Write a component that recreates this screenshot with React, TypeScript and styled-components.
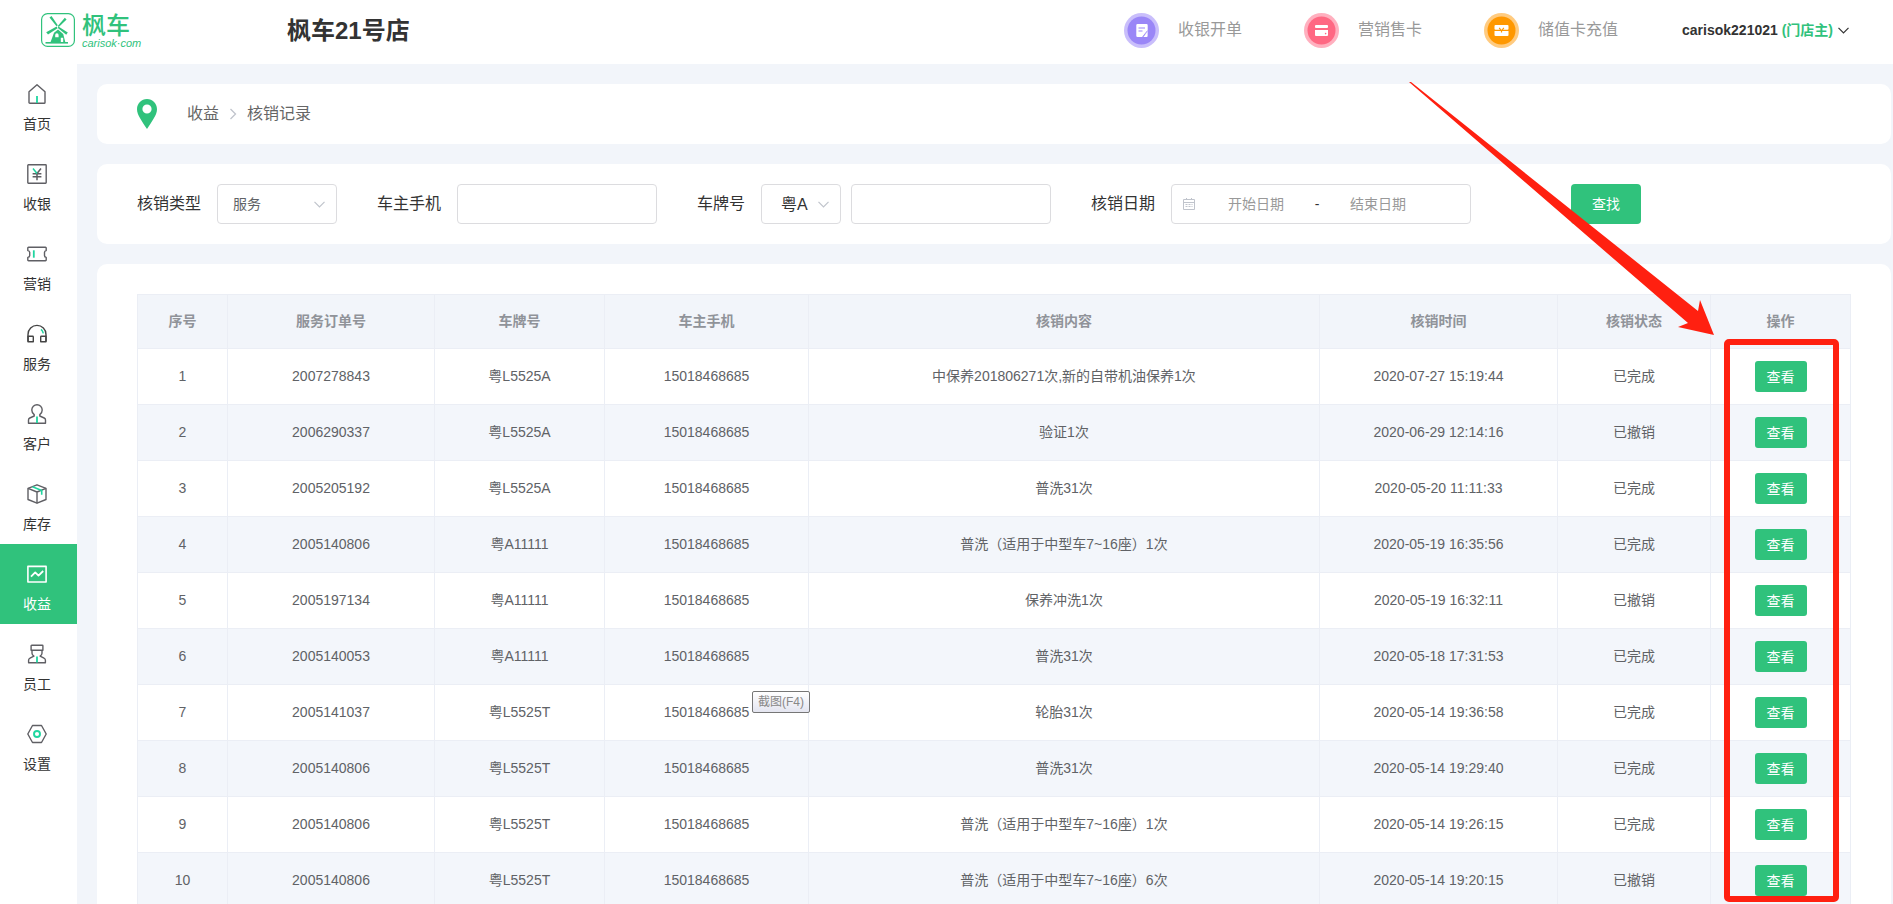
import React from "react";
import styled, { createGlobalStyle, css } from "styled-components";

const GREEN = "#30c27c";
const MINT = "#1fd6a0";
const INK = "#5f5f64";

const GlobalStyle = createGlobalStyle`
  *, *::before, *::after { box-sizing: border-box; }
  body {
    margin: 0;
    background: #f2f5fa;
    color: #333;
    font-family: "Liberation Sans", "Noto Sans CJK SC", sans-serif;
    font-size: 14px;
  }
  button, input, select { font: inherit; margin: 0; }
  a { color: inherit; text-decoration: none; }
`;

/* ---------- shell ---------- */

const Shell = styled.div`
  display: flex;
  flex-direction: column;
  height: 100vh;
`;

const TopBar = styled.header`
  display: flex;
  align-items: center;
  flex: none;
  height: 64px;
  padding: 0 44px 14px 41px;
  background: #fff;
`;

const Body = styled.div`
  display: flex;
  flex: 1;
  min-height: 0;
`;

const Main = styled.main`
  flex: 1;
  min-width: 0;
  overflow: auto;
  scrollbar-width: none;
`;

const Canvas = styled.div`
  position: relative;
  display: flex;
  flex-direction: column;
  gap: 20px;
  padding: 20px 2px 20px 20px;
`;

/* ---------- top bar ---------- */

const Brand = styled.a`
  display: flex;
  align-items: center;
  gap: 7px;
  width: 246px;
  padding-top: 10px;
  color: ${GREEN};
`;

const BrandText = styled.span`
  display: flex;
  flex-direction: column;
  gap: 2px;
`;

const BrandName = styled.span`
  font-family: "Noto Sans CJK SC", sans-serif;
  font-size: 24px;
  line-height: 24px;
  font-weight: 500;
`;

const BrandDomain = styled.span`
  font-family: "Liberation Sans", sans-serif;
  font-style: italic;
  font-size: 11px;
  line-height: 10px;
`;

const StoreName = styled.h1`
  margin: 0;
  padding-top: 12px;
  font-size: 24px;
  line-height: 30px;
  font-weight: 700;
`;

const Shortcuts = styled.nav`
  display: flex;
  gap: 62px;
  margin-left: auto;
  padding-top: 10px;
`;

const Shortcut = styled.a`
  display: flex;
  align-items: center;
  gap: 19px;
  font-size: 16px;
  line-height: 22px;
  color: #999;
`;

const UserMenu = styled.button`
  display: flex;
  align-items: center;
  gap: 5px;
  margin-left: 64px;
  padding: 10px 0 0;
  border: 0;
  background: none;
  color: #333;
  font-size: 14px;
  line-height: 20px;
  font-weight: 700;
`;

const Role = styled.span`
  color: ${GREEN};
`;

/* ---------- side bar ---------- */

const SideBar = styled.nav`
  flex: none;
  width: 77px;
  background: #fff;
`;

const SideItem = styled.a<{ $active?: boolean }>`
  display: flex;
  flex-direction: column;
  align-items: center;
  gap: 10px;
  height: 80px;
  padding: 20px 3px 0 0;
  line-height: 20px;
  color: #333;
  ${(p) =>
    p.$active &&
    css`
      background: ${GREEN};
      color: #fff;
    `}
`;

/* ---------- cards ---------- */

const Card = styled.section`
  background: #fff;
  border-radius: 10px;
`;

const Crumbs = styled(Card)`
  display: flex;
  align-items: center;
  height: 60px;
  padding: 0 40px;
  gap: 30px;
`;

const CrumbTrail = styled.nav`
  display: flex;
  align-items: center;
  gap: 10px;
  font-size: 16px;
  line-height: 24px;
  color: #666;
`;

const FilterBar = styled(Card).attrs({ as: "form" })`
  display: flex;
  align-items: center;
  gap: 40px;
  padding: 20px 40px;
`;

const Field = styled.div`
  display: flex;
  align-items: center;
  gap: 10px;
`;

const FieldLabel = styled.label`
  margin-right: 6px;
  font-size: 16px;
  line-height: 24px;
  white-space: nowrap;
`;

const controlBox = css`
  height: 40px;
  border: 1px solid #dcdcdf;
  border-radius: 4px;
  background: #fff;
  outline: none;
`;

const SelectWrap = styled.span`
  position: relative;
  display: flex;
  align-items: center;
`;

const SelectBox = styled.select<{ $compact?: boolean }>`
  ${controlBox}
  appearance: none;
  width: ${(p) => (p.$compact ? 80 : 120)}px;
  padding: 0 10px 0 ${(p) => (p.$compact ? 19 : 15)}px;
  font-size: ${(p) => (p.$compact ? 16 : 14)}px;
  color: ${(p) => (p.$compact ? "#333" : "#606266")};
`;

const SelectArrow = styled.span`
  position: absolute;
  right: 12px;
  display: flex;
  pointer-events: none;
`;

const TextBox = styled.input`
  ${controlBox}
  width: 200px;
  padding: 0 15px;
`;

const DateRange = styled.div`
  ${controlBox}
  display: flex;
  align-items: center;
  width: 300px;
  padding: 0 10px;
`;

const DateInput = styled.input`
  width: 108px;
  padding: 0;
  border: 0;
  outline: none;
  text-align: center;
  color: #606266;
  &::placeholder {
    color: #999;
    opacity: 1;
  }
`;

const DateIcon = styled.svg`
  flex: none;
  margin-right: 6px;
`;

const Dash = styled.span`
  width: 14px;
  text-align: center;
`;

const ActionButton = styled.button<{ $small?: boolean }>`
  width: ${(p) => (p.$small ? 52 : 70)}px;
  height: ${(p) => (p.$small ? 31 : 40)}px;
  margin-left: ${(p) => (p.$small ? 0 : 60)}px;
  padding: 0;
  border: 0;
  border-radius: ${(p) => (p.$small ? 3 : 4)}px;
  background: ${GREEN};
  color: #fff;
  line-height: 20px;
  vertical-align: middle;
`;

/* ---------- table ---------- */

const TableCard = styled(Card)`
  padding: 30px 40px;
`;

const Table = styled.table`
  width: 100%;
  table-layout: fixed;
  border-collapse: separate;
  border-spacing: 0;
  border: 1px solid #ebeef5;
  border-width: 1px 0 0 1px;
  text-align: center;
  line-height: 23px;
`;

const Col = styled.col<{ $w?: number }>`
  width: ${(p) => (p.$w ? `${p.$w}px` : "auto")};
`;

const HeadCell = styled.th`
  height: 54px;
  padding: 0;
  border: 1px solid #ebeef5;
  border-width: 0 1px 1px 0;
  background: #f2f5fa;
  color: #909399;
  font-weight: 700;
`;

const Row = styled.tr`
  &:nth-child(even) {
    background: #f3f6fb;
  }
`;

const Cell = styled.td`
  height: 56px;
  padding: 0;
  border: 1px solid #ebeef5;
  border-width: 0 1px 1px 0;
  color: #606266;
`;

/* ---------- overlays ---------- */

const Highlight = styled.div`
  position: absolute;
  top: 275px;
  right: 54px;
  width: 115px;
  height: 563px;
  border: 6px solid #ff2010;
  border-radius: 5px;
  pointer-events: none;
`;

const Pointer = styled.svg`
  position: absolute;
  top: 18px;
  right: 179px;
  pointer-events: none;
`;

const Tooltip = styled.div`
  position: absolute;
  top: 627px;
  left: 675px;
  height: 22px;
  padding: 0 5px;
  border: 1px solid #767676;
  border-radius: 2px;
  background: linear-gradient(#fff, #e4e5f0);
  color: #888;
  font-size: 12px;
  line-height: 20px;
`;

/* ---------- drawings ---------- */

const Chevron = ({ color = "#c0c4cc", w = 11 }: { color?: string; w?: number }) => (
  <svg width={w} height="7" viewBox="0 0 11 7" fill="none" stroke={color} strokeWidth="1.2">
    <path d="M0.5 0.8 5.5 6 10.5 0.8" />
  </svg>
);

const Windmill = () => (
  <svg width="34" height="34" viewBox="0 0 34 34" fill="none" stroke={GREEN}>
    <rect x="0.6" y="0.6" width="32.8" height="32.8" rx="6" strokeWidth="1.2" />
    <path d="M8.500 4.500 10.500 3 16.800 12.200 15.500 13.200Z" fill={GREEN} stroke="none" />
    <path d="M23.800 4.800 25.600 6.600 17.800 14 16.800 13Z" fill={GREEN} stroke="none" />
    <path d="M5.200 19.200 15.600 13.400 16.600 15.200 7 21.600Z" fill={GREEN} stroke="none" />
    <path d="M17.400 13.400 26.800 19.400 25.200 21.800 16.800 15Z" fill={GREEN} stroke="none" />
    <path
      d="M13 19.800 9.400 29.600h10.400v-4.800h2.400v4.800h2.200L22.200 21 17 16.600Z M14.200 22a1.700 1.700 0 0 1 3.400 0v2.200h-3.400Z"
      fill={GREEN}
      fillRule="evenodd"
      stroke="none"
    />
    <path d="M4.500 29.800h22.500" strokeWidth="1.6" />
  </svg>
);

const Pin = () => (
  <svg width="20" height="30" viewBox="0 0 20 30">
    <path
      d="M10 0C4.400 0 0 4.500 0 10.200 0 16 5 22 10 30 15 22 20 16 20 10.200 20 4.500 15.600 0 10 0Zm0 14.600a4.600 4.600 0 1 1 0-9.200 4.600 4.600 0 0 1 0 9.200Z"
      fill={GREEN}
    />
  </svg>
);

const Badge = ({ tone, halo, children }: { tone: string; halo: string; children: React.ReactNode }) => (
  <svg width="35" height="35" viewBox="0 0 35 35">
    <circle cx="17.5" cy="17.5" r="17.5" fill={halo} />
    <circle cx="17.5" cy="17.5" r="14" fill={tone} />
    {children}
  </svg>
);

const OrderGlyph = () => (
  <g>
    <path d="M13.5 11h9a1.2 1.2 0 0 1 1.2 1.2v6.3L18.6 24h-5.1a1.2 1.2 0 0 1-1.2-1.2V12.2A1.2 1.2 0 0 1 13.5 11Z" fill="#fff" />
    <path d="M14.5 15h6.5M14.5 18h4" stroke="#9a86f7" strokeWidth="1.2" />
    <path d="M23.6 18.6 19.4 24h3.2a1 1 0 0 0 1-1Z" fill="#fff" />
    <path d="M23.6 17.6 18.6 23.8" stroke="#9a86f7" strokeWidth="0.9" />
  </g>
);

const CardGlyph = () => (
  <g>
    <rect x="11" y="12" width="13" height="3" rx="1" fill="#fff" />
    <path d="M11 17h13v5a1 1 0 0 1-1 1H12a1 1 0 0 1-1-1Z" fill="#fff" />
    <circle cx="21.6" cy="20.6" r="0.8" fill="#ff6883" />
  </g>
);

const TopUpGlyph = () => (
  <g>
    <rect x="10.500" y="12" width="14" height="4.800" rx="1" fill="#fff" />
    <path d="M10.500 18h14V22a1 1 0 0 1-1 1h-12a1 1 0 0 1-1-1Z" fill="#fff" />
    <path d="M15.200 14.800 17.500 18 19.800 14.800M17.500 18v1.600" stroke="#ff9800" strokeWidth="1.200" fill="none" />
  </g>
);

const NavIcon = ({ children, color = INK }: { children: React.ReactNode; color?: string }) => (
  <svg width="20" height="20" viewBox="0 0 20 20" fill="none" stroke={color} strokeWidth="1.4" strokeLinejoin="round">
    {children}
  </svg>
);

const icons = {
  home: (
    <NavIcon>
      <path d="M2 7.8 10 .8l8 7v10.6a.9.9 0 0 1-.9.9H2.9a.9.9 0 0 1-.9-.9Z" />
      <path d="M10 12v7" stroke={MINT} strokeWidth="1.8" />
    </NavIcon>
  ),
  cash: (
    <NavIcon>
      <rect x=".8" y=".8" width="18.4" height="18.4" rx=".6" />
      <path d="M14 4.5 10 9.5v6.800M5.600 9.800h8.800M5.600 12.800h8.800" strokeWidth="1.500" />
      <path d="M6 4.500l4 5" stroke={MINT} strokeWidth="1.500" />
    </NavIcon>
  ),
  ticket: (
    <NavIcon>
      <path d="M.8 3.900a.7.700 0 0 1 .7-.7h17a.7.700 0 0 1 .7.700v2.700a2 2 0 0 0-1.700 1.800v3.200a2 2 0 0 0 1.700 1.800v2.700a.7.700 0 0 1-.7.700h-17a.7.700 0 0 1-.7-.7v-2.700a2 2 0 0 0 1.900-1.800v-3.200a2 2 0 0 0-1.900-1.800Z" />
      <path d="M6.800 6.300v7.400" stroke={MINT} strokeWidth="1.800" />
    </NavIcon>
  ),
  service: (
    <NavIcon color="#444">
      <path d="M1 17.600V10.400a9 9 0 0 1 18 0v7.200" />
      <path d="M1 12.200h4.600a.7.700 0 0 1 .7.700v4.800H1Z M19 12.200h-4.600a.7.700 0 0 0-.7.700v4.800H19Z" />
      <path d="M14 5.400c1.200 1 2 2.400 2.300 4" stroke={MINT} strokeWidth="1.500" />
    </NavIcon>
  ),
  client: (
    <NavIcon>
      <path d="M7.200 10.600C5.400 9.200 4.800 7.800 4.800 5.900a5.200 5.200 0 0 1 10.400 0c0 1.900-.6 3.300-2.400 4.700v1.400l4.400 2c1 .5 1.300 1.100 1.300 2.100v3.100h-17v-3.100c0-1 .3-1.600 1.300-2.100l4.400-2Z" />
      <path d="M10 12.600v6.400" stroke={MINT} strokeWidth="1.800" />
    </NavIcon>
  ),
  stock: (
    <NavIcon>
      <path d="M10 .8 19 4.300v11.200L10 19.200 1 15.500V4.300Z" />
      <path d="M1 4.300 10 8l9-3.700M10 8v11.200" />
      <path d="M5.500 2.800l9.200 3.600v4.400" stroke={MINT} strokeWidth="1.600" />
    </NavIcon>
  ),
  income: (
    <NavIcon color="#fff">
      <path d="M.9 2.400h18.200v15.600H.9Z" strokeWidth="1.600" />
      <path d="M4 12.600 8.200 8.400l3.300 3.200L16.200 7" strokeWidth="1.800" />
    </NavIcon>
  ),
  staff: (
    <NavIcon>
      <path d="M4.700 1.200h10.600a.6.600 0 0 1 .6.600v4.500H4.100V1.800a.6.600 0 0 1 .6-.6Z" />
      <path d="M5 6.300v3c0 1.300.8 2.100 1.900 2.800L3 14.200c-1 .5-1.400 1.100-1.400 2.100v2.500h16.800v-2.500c0-1-.4-1.600-1.400-2.100l-3.900-2.100c1.100-.7 1.900-1.500 1.900-2.800v-3" />
      <path d="M10 12.600v5.800" stroke={MINT} strokeWidth="1.800" />
    </NavIcon>
  ),
  settings: (
    <NavIcon>
      <path d="M5.500 1.500h9L19.200 10l-4.700 8.500h-9L.8 10Z" />
      <circle cx="10" cy="10" r="3" stroke={MINT} strokeWidth="1.900" />
    </NavIcon>
  ),
};

/* ---------- data ---------- */

const nav: { icon: keyof typeof icons; label: string }[] = [
  { icon: "home", label: "首页" },
  { icon: "cash", label: "收银" },
  { icon: "ticket", label: "营销" },
  { icon: "service", label: "服务" },
  { icon: "client", label: "客户" },
  { icon: "stock", label: "库存" },
  { icon: "income", label: "收益" },
  { icon: "staff", label: "员工" },
  { icon: "settings", label: "设置" },
];

const columns: { title: string; width?: number }[] = [
  { title: "序号", width: 90 },
  { title: "服务订单号", width: 207 },
  { title: "车牌号", width: 170 },
  { title: "车主手机", width: 204 },
  { title: "核销内容" },
  { title: "核销时间", width: 238 },
  { title: "核销状态", width: 153 },
  { title: "操作", width: 140 },
];

const records = [
  ["2007278843", "粤L5525A", "中保养201806271次,新的自带机油保养1次", "2020-07-27 15:19:44", "已完成"],
  ["2006290337", "粤L5525A", "验证1次", "2020-06-29 12:14:16", "已撤销"],
  ["2005205192", "粤L5525A", "普洗31次", "2020-05-20 11:11:33", "已完成"],
  ["2005140806", "粤A11111", "普洗（适用于中型车7~16座）1次", "2020-05-19 16:35:56", "已完成"],
  ["2005197134", "粤A11111", "保养冲洗1次", "2020-05-19 16:32:11", "已撤销"],
  ["2005140053", "粤A11111", "普洗31次", "2020-05-18 17:31:53", "已完成"],
  ["2005141037", "粤L5525T", "轮胎31次", "2020-05-14 19:36:58", "已完成"],
  ["2005140806", "粤L5525T", "普洗31次", "2020-05-14 19:29:40", "已完成"],
  ["2005140806", "粤L5525T", "普洗（适用于中型车7~16座）1次", "2020-05-14 19:26:15", "已完成"],
  ["2005140806", "粤L5525T", "普洗（适用于中型车7~16座）6次", "2020-05-14 19:20:15", "已撤销"],
];

const OWNER_PHONE = "15018468685";

export default function App() {
  return (
    <Shell>
      <GlobalStyle />
      <TopBar>
        <Brand href="#">
          <Windmill />
          <BrandText>
            <BrandName>枫车</BrandName>
            <BrandDomain>carisok·com</BrandDomain>
          </BrandText>
        </Brand>
        <StoreName>枫车21号店</StoreName>
        <Shortcuts>
          <Shortcut href="#">
            <Badge tone="#9a86f7" halo="#c9befb"><OrderGlyph /></Badge>
            收银开单
          </Shortcut>
          <Shortcut href="#">
            <Badge tone="#ff6883" halo="#ffb0bf"><CardGlyph /></Badge>
            营销售卡
          </Shortcut>
          <Shortcut href="#">
            <Badge tone="#ff9800" halo="#ffcb80"><TopUpGlyph /></Badge>
            储值卡充值
          </Shortcut>
        </Shortcuts>
        <UserMenu type="button">
          <span>
            carisok221021 <Role>(门店主)</Role>
          </span>
          <Chevron color="#333" />
        </UserMenu>
      </TopBar>

      <Body>
        <SideBar>
          {nav.map((n) => (
            <SideItem key={n.label} href="#" $active={n.icon === "income"}>
              {icons[n.icon]}
              {n.label}
            </SideItem>
          ))}
        </SideBar>

        <Main>
          <Canvas>
            <Crumbs>
              <Pin />
              <CrumbTrail>
                <a href="#">收益</a>
                <svg width="8" height="12" viewBox="0 0 8 12" fill="none" stroke="#c0c4cc" strokeWidth="1.3">
                  <path d="M1.5 1 6.5 6l-5 5" />
                </svg>
                <a href="#">核销记录</a>
              </CrumbTrail>
            </Crumbs>

            <FilterBar>
              <Field>
                <FieldLabel htmlFor="kind">核销类型</FieldLabel>
                <SelectWrap>
                  <SelectBox id="kind" defaultValue="服务">
                    <option>服务</option>
                  </SelectBox>
                  <SelectArrow><Chevron /></SelectArrow>
                </SelectWrap>
              </Field>
              <Field>
                <FieldLabel htmlFor="phone">车主手机</FieldLabel>
                <TextBox id="phone" type="text" />
              </Field>
              <Field>
                <FieldLabel htmlFor="plate">车牌号</FieldLabel>
                <SelectWrap>
                  <SelectBox $compact aria-label="车牌号" defaultValue="粤A">
                    <option>粤A</option>
                  </SelectBox>
                  <SelectArrow><Chevron /></SelectArrow>
                </SelectWrap>
                <TextBox id="plate" type="text" />
              </Field>
              <Field>
                <FieldLabel htmlFor="from">核销日期</FieldLabel>
                <DateRange>
                  <DateIcon width="14" height="14" viewBox="0 0 14 14" fill="none" stroke="#c0c4cc">
                    <path d="M1.5 2.5h11v10h-11ZM1.5 5.5h11M4.5 1v2M9.5 1v2" />
                    <path d="M3.5 7.5h7M3.5 9.500h7" strokeDasharray="2 1" />
                  </DateIcon>
                  <DateInput id="from" type="text" placeholder="开始日期" />
                  <Dash>-</Dash>
                  <DateInput type="text" placeholder="结束日期" aria-label="结束日期" />
                </DateRange>
              </Field>
              <ActionButton type="button">查找</ActionButton>
            </FilterBar>

            <TableCard>
              <Table>
                <colgroup>
                  {columns.map((c) => (
                    <Col key={c.title} $w={c.width} />
                  ))}
                </colgroup>
                <thead>
                  <tr>
                    {columns.map((c) => (
                      <HeadCell key={c.title} scope="col">{c.title}</HeadCell>
                    ))}
                  </tr>
                </thead>
                <tbody>
                  {records.map(([order, plate, content, time, status], i) => (
                    <Row key={i}>
                      <Cell>{i + 1}</Cell>
                      <Cell>{order}</Cell>
                      <Cell>{plate}</Cell>
                      <Cell>{OWNER_PHONE}</Cell>
                      <Cell>{content}</Cell>
                      <Cell>{time}</Cell>
                      <Cell>{status}</Cell>
                      <Cell>
                        <ActionButton $small type="button">查看</ActionButton>
                      </Cell>
                    </Row>
                  ))}
                </tbody>
              </Table>
            </TableCard>

            <Tooltip role="tooltip">截图(F4)</Tooltip>
            <Highlight />
            <Pointer width="305" height="253" viewBox="0 0 305 253">
              <path d="M0 0H2L289 229 291 218 305 253 269 245 279 241Z" fill="#ff2010" />
            </Pointer>
          </Canvas>
        </Main>
      </Body>
    </Shell>
  );
}
